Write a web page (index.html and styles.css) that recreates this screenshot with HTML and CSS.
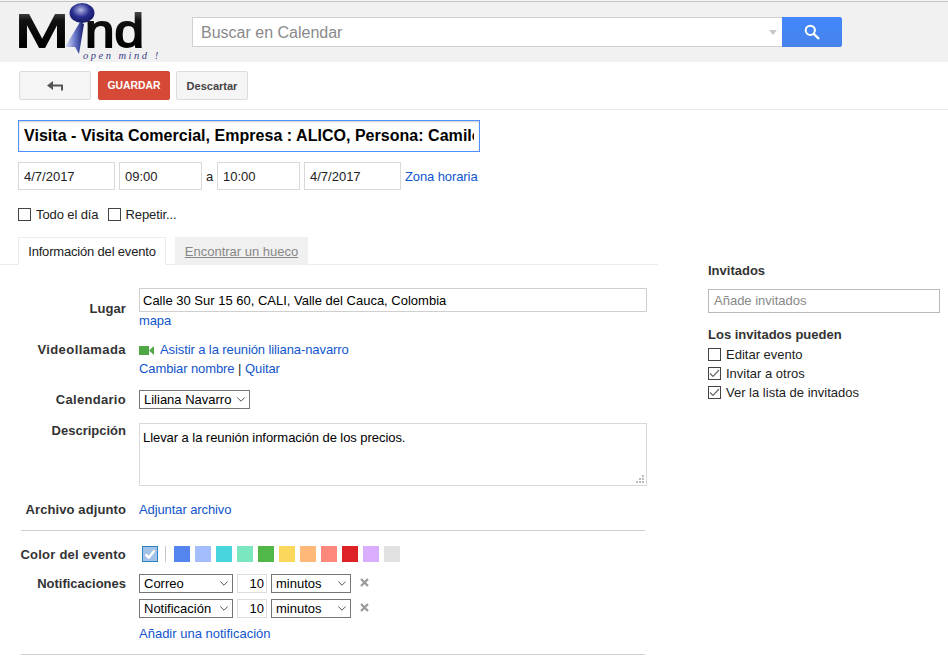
FILE: index.html
```html
<!DOCTYPE html>
<html lang="es">
<head>
<meta charset="utf-8">
<title>Calendar</title>
<link rel="stylesheet" href="styles.css">
</head>
<body>
<header class="topbar">
  <svg class="logo" width="165" height="60" viewBox="0 0 165 60" aria-label="Mind">
    <defs>
      <linearGradient id="ink" x1="0" y1="0" x2="0" y2="1">
        <stop offset="0" stop-color="#777"/><stop offset="0.3" stop-color="#111"/><stop offset="0.8" stop-color="#000"/><stop offset="1" stop-color="#555"/>
      </linearGradient>
      <radialGradient id="ball" cx="0.45" cy="0.35" r="0.7">
        <stop offset="0" stop-color="#b4b9e6"/><stop offset="0.5" stop-color="#2a2f90"/><stop offset="1" stop-color="#10145a"/>
      </radialGradient>
      <linearGradient id="stem" x1="0" y1="0" x2="1" y2="0">
        <stop offset="0" stop-color="#e4e7f7"/><stop offset="0.55" stop-color="#6472c6"/><stop offset="1" stop-color="#12186a"/>
      </linearGradient>
    </defs>
    <text class="logo-big" x="15" y="45" textLength="54" lengthAdjust="spacingAndGlyphs" fill="url(#ink)" stroke="url(#ink)" stroke-width="1.8">M</text>
    <text class="logo-big" x="85" y="45" textLength="59" lengthAdjust="spacingAndGlyphs" fill="url(#ink)" stroke="url(#ink)" stroke-width="1.8">nd</text>
    <path d="M80 20 L84 22 L79 52 L75 45 L65 45 Z" fill="url(#stem)"/>
    <ellipse cx="82" cy="11" rx="12.5" ry="10" fill="url(#ball)"/>
    <text class="logo-small" x="83" y="57" fill="#3a3f8a">open mind !</text>
  </svg>
  <form class="search">
    <div class="search-box">
      <span class="search-ph">Buscar en Calendar</span>
      <span class="search-caret"></span>
    </div>
    <div class="search-btn">
      <svg width="16" height="16" viewBox="0 0 16 16"><circle cx="6.3" cy="6.3" r="4.6" fill="none" stroke="#fff" stroke-width="2"/><path d="M9.8 9.8 L15 15" stroke="#fff" stroke-width="2.4"/></svg>
    </div>
  </form>
</header>

<div class="toolbar">
  <button class="btn btn-back" type="button">
    <svg width="16" height="10" viewBox="0 0 16 10"><path d="M0 4.5 L6 0 V3.5 H16 V9.5 H14 V5.5 H6 V9 Z" fill="#555"/></svg>
  </button>
  <button class="btn btn-save" type="button">GUARDAR</button>
  <button class="btn btn-discard" type="button">Descartar</button>
</div>

<main class="main">
  <section class="left">
    <div class="title-input"><span class="title-text">Visita - Visita Comercial, Empresa : ALICO, Persona: Camilo Restrepo</span></div>

    <div class="date-row">
      <span class="field w-date">4/7/2017</span>
      <span class="field w-time">09:00</span>
      <span class="a">a</span>
      <span class="field w-time">10:00</span>
      <span class="field w-date">4/7/2017</span>
      <a class="link">Zona horaria</a>
    </div>

    <div class="check-row">
      <label class="check-item"><span class="box"></span>Todo el día</label>
      <label class="check-item"><span class="box"></span>Repetir...</label>
    </div>

    <div class="tabs">
      <span class="tab tab-on">Información del evento</span>
      <span class="tab tab-off">Encontrar un hueco</span>
    </div>

    <div class="form">
      <div class="row row-place">
        <span class="lab lab-place">Lugar</span>
        <div class="val">
          <span class="field field-wide">Calle 30 Sur 15 60, CALI, Valle del Cauca, Colombia</span>
          <a class="link link-map">mapa</a>
        </div>
      </div>
      <div class="row row-video">
        <span class="lab">Videollamada</span>
        <div class="val">
          <div class="video-line">
            <svg class="cam" width="15" height="9" viewBox="0 0 15 9"><rect width="10" height="9" fill="#4fa845"/><path d="M10 4.5 L15 0 V9 Z" fill="#4fa845"/></svg>
            <a class="link">Asistir a la reunión liliana-navarro</a>
          </div>
          <div class="video-links"><a class="link">Cambiar nombre</a> | <a class="link">Quitar</a></div>
        </div>
      </div>
      <div class="row row-cal">
        <span class="lab">Calendario</span>
        <div class="val">
          <span class="sel-wrap sel-cal"><select class="sel"><option>Liliana Navarro</option></select><svg class="chev" width="8" height="5" viewBox="0 0 8 5"><path d="M0.3 0.5 L4 4.2 L7.7 0.5" fill="none" stroke="#555" stroke-width="1"/></svg></span>
        </div>
      </div>
      <div class="row row-desc">
        <span class="lab lab-tight">Descripción</span>
        <div class="val">
          <div class="desc">Llevar a la reunión información de los precios.
            <svg class="grip" width="8" height="8" viewBox="0 0 8 8"><path d="M6 0h2v2H6zM3 3h2v2H3zM6 3h2v2H6zM0 6h2v2H0zM3 6h2v2H3zM6 6h2v2H6z" fill="#bbb"/></svg>
          </div>
        </div>
      </div>
      <div class="row row-attach">
        <span class="lab">Archivo adjunto</span>
        <div class="val"><a class="link">Adjuntar archivo</a></div>
      </div>
      <hr class="rule">
      <div class="row row-color">
        <span class="lab">Color del evento</span>
        <div class="val swatches">
          <span class="sw sw-current"><svg width="14" height="14" viewBox="0 0 14 14"><path d="M2.5 7.5 L5.8 10.5 L11.5 3.5" fill="none" stroke="#fff" stroke-width="2.4"/></svg></span>
          <span class="sw-sep"></span>
          <span class="sw c1"></span><span class="sw c2"></span><span class="sw c3"></span><span class="sw c4"></span><span class="sw c5"></span><span class="sw c6"></span><span class="sw c7"></span><span class="sw c8"></span><span class="sw c9"></span><span class="sw c10"></span><span class="sw c11"></span>
        </div>
      </div>
      <div class="row row-notif">
        <span class="lab lab-notif lab-tight">Notificaciones</span>
        <div class="val">
          <div class="notif">
            <span class="sel-wrap sel-type"><select class="sel"><option>Correo</option></select><svg class="chev" width="8" height="5" viewBox="0 0 8 5"><path d="M0.3 0.5 L4 4.2 L7.7 0.5" fill="none" stroke="#555" stroke-width="1"/></svg></span>
            <span class="num">10</span>
            <span class="sel-wrap sel-unit"><select class="sel"><option>minutos</option></select><svg class="chev" width="8" height="5" viewBox="0 0 8 5"><path d="M0.3 0.5 L4 4.2 L7.7 0.5" fill="none" stroke="#555" stroke-width="1"/></svg></span>
            <svg class="x" width="9" height="9" viewBox="0 0 9 9"><path d="M1 1 L8 8 M8 1 L1 8" stroke="#999" stroke-width="2.2"/></svg>
          </div>
          <div class="notif">
            <span class="sel-wrap sel-type"><select class="sel"><option>Notificación</option></select><svg class="chev" width="8" height="5" viewBox="0 0 8 5"><path d="M0.3 0.5 L4 4.2 L7.7 0.5" fill="none" stroke="#555" stroke-width="1"/></svg></span>
            <span class="num">10</span>
            <span class="sel-wrap sel-unit"><select class="sel"><option>minutos</option></select><svg class="chev" width="8" height="5" viewBox="0 0 8 5"><path d="M0.3 0.5 L4 4.2 L7.7 0.5" fill="none" stroke="#555" stroke-width="1"/></svg></span>
            <svg class="x" width="9" height="9" viewBox="0 0 9 9"><path d="M1 1 L8 8 M8 1 L1 8" stroke="#999" stroke-width="2.2"/></svg>
          </div>
          <a class="link link-add">Añadir una notificación</a>
        </div>
      </div>
      <hr class="rule rule-end">
    </div>
  </section>

  <aside class="right">
    <h3 class="side-h">Invitados</h3>
    <div class="guest-input">Añade invitados</div>
    <h3 class="side-h side-h2">Los invitados pueden</h3>
    <label class="perm"><span class="box"></span>Editar evento</label>
    <label class="perm"><span class="box"><svg width="13" height="13" viewBox="0 0 13 13"><path d="M2 6.5 L5 9.5 L11 3" fill="none" stroke="#666" stroke-width="1.2"/></svg></span>Invitar a otros</label>
    <label class="perm"><span class="box"><svg width="13" height="13" viewBox="0 0 13 13"><path d="M2 6.5 L5 9.5 L11 3" fill="none" stroke="#666" stroke-width="1.2"/></svg></span>Ver la lista de invitados</label>
  </aside>
</main>
</body>
</html>
```
FILE: styles.css
```css
* { box-sizing: border-box; }
html, body { margin: 0; padding: 0; height: 659px; overflow: hidden; }
body { background: #fff; color: #222; font: 13px/15px "Liberation Sans", Arial, sans-serif; }
.link { color: #1155cc; text-decoration: none; letter-spacing: -.1px; }

.topbar { height: 62px; background: #f1f1f1; border-top: 1px solid #f6f6f6; box-shadow: inset 0 1px #c4c4c4; display: flex; align-items: flex-start; padding-top: 1px; }
.logo { display: block; flex: none; margin-right: 27px; width: 165px; height: 60px; }
.logo-big { font: 46px "Liberation Sans", Arial, sans-serif; }
.logo-small { font: italic 10.5px "Liberation Serif", serif; letter-spacing: 2.5px; }
.search { display: flex; margin-top: 15px; }
.search-box { width: 590px; height: 30px; background: #fff; border: 1px solid #d0d0d0; border-right: 0; display: flex; align-items: center; justify-content: space-between; padding: 0 5px 0 8px; }
.search-ph { font-size: 16px; color: #8a8a8a; }
.search-caret { width: 0; height: 0; border: 4px solid transparent; border-top: 5px solid #c8c8c8; border-bottom: 0; }
.search-btn { width: 60px; height: 30px; background: linear-gradient(#4387fd, #4683ea); border-radius: 0 2px 2px 0; display: flex; align-items: center; justify-content: center; }

.toolbar { height: 48px; padding: 9px 0 0 19px; border-bottom: 1px solid #ebebeb; display: flex; align-items: flex-start; gap: 7px; }
.btn { height: 29px; border-radius: 2px; border: 1px solid #dcdcdc; background: #f5f5f5; font: bold 11px "Liberation Sans", Arial, sans-serif; color: #444; padding: 0; display: flex; align-items: center; justify-content: center; }
.btn-back { width: 72px; }
.btn-save { width: 72px; background: #d64937; border-color: #d14836; color: #fff; font-size: 10.4px; }
.btn-discard { width: 72px; margin-left: -1px; }

.main { display: flex; align-items: flex-start; }
.left { width: 658px; flex: none; padding-top: 10px; }
.right { margin-left: 50px; width: 232px; padding-top: 153px; }

.title-input { width: 462px; height: 32px; margin-left: 18px; border: 1px solid #4d90fe; box-shadow: inset 0 1px 2px rgba(0,0,0,.2); padding: 0 0 0 5px; display: flex; align-items: center; overflow: hidden; }
.title-text { font: bold 16px "Liberation Sans", Arial, sans-serif; letter-spacing: .03px; color: #000; white-space: nowrap; display: block; width: 450px; overflow: hidden; }

.date-row { display: flex; align-items: center; margin: 10px 0 0 18px; height: 28px; }
.field { display: flex; align-items: center; border: 1px solid #d9d9d9; height: 28px; padding-left: 5px; color: #222; white-space: nowrap; }
.w-date { width: 97px; }
.w-time { width: 83px; margin-left: 4px; }
.a { width: 11px; padding-left: 4px; }
.a + .w-time { margin-left: 4px; }
.w-time + .w-date { margin-left: 4px; }
.date-row .link { margin-left: 4px; }

.check-row { display: flex; margin: 18px 0 0 18px; height: 13px; align-items: center; gap: 9px; }
.check-item { display: flex; align-items: center; gap: 5px; letter-spacing: -.1px; }
.box { display: block; flex: none; width: 13px; height: 13px; border: 1px solid #444; background: #fff; position: relative; }
.box svg { display: block; margin: -1px; }

.tabs { display: flex; margin: 16px 0 0 18px; height: 28px; gap: 9px; align-items: flex-end; }
.tab { height: 28px; display: flex; align-items: center; justify-content: center; }
.tab-on { width: 148px; border: 1px solid #ececec; border-bottom: 1px solid #fff; background: #fff; letter-spacing: -.18px; }
.tab-off { width: 133px; background: #f0f0f0; color: #888; text-decoration: underline; }

.form { border-top: 1px solid #ebebeb; margin-top: -1px; padding-top: 23px; }
.row { display: flex; }
.lab { flex: none; width: 126px; font-weight: bold; text-align: right; color: #333; margin-right: 13px; letter-spacing: .1px; }
.lab-tight { letter-spacing: 0; }
.val { flex: none; width: 508px; }

.lab-place { padding-top: 13px; }
.row-place .field { height: 24px; border-color: #cfcfcf; padding-left: 3px; color: #000; }
.link-map { display: block; margin-top: 1px; }
.row-video { margin-top: 14px; }
.row-video .lab { letter-spacing: .42px; }
.video-line { display: flex; align-items: center; gap: 6px; height: 15px; }
.cam { display: block; margin-top: 1px; }
.video-links { margin-top: 4px; }
.row-cal { margin-top: 14px; }
.row-cal .lab { padding-top: 2px; letter-spacing: .3px; }
.sel-wrap { display: block; position: relative; flex: none; height: 19px; }
.sel { appearance: none; -webkit-appearance: none; width: 100%; font: 13px "Liberation Sans", Arial, sans-serif; color: #000; background: #fff; height: 19px; border: 1px solid #767676; border-radius: 0; padding: 0 0 0 4px; display: block; }
.chev { position: absolute; right: 5px; top: 7px; pointer-events: none; }
.sel-cal { width: 111px; }
.row-desc { margin-top: 14px; }
.desc { position: relative; width: 508px; height: 63px; border: 1px solid #d9d9d9; padding: 6px 3px 0; line-height: 15px; color: #000; letter-spacing: -.06px; }
.grip { position: absolute; right: 2px; bottom: 2px; }
.row-attach { margin-top: 16px; }

.rule { width: 624px; margin: 13px 0 0 21px; height: 0; border: 0; border-top: 1px solid #cfcfcf; }
.row-color { margin-top: 15px; height: 16px; }
.row-color .lab { line-height: 16px; padding-top: 1px; letter-spacing: .23px; }
.swatches { display: flex; align-items: flex-start; margin-left: 3px; gap: 5px; }
.sw { display: block; width: 16px; height: 16px; flex: none; }
.sw-current { background: #a4c2e8; border: 1px solid #2a82c0; display: flex; align-items: center; justify-content: center; }
.sw-sep { width: 1px; height: 16px; background: #c8c8c8; margin: 0 3px 0 2px; }
.c1 { background: #5484ed; }
.c2 { background: #a4bdfc; }
.c3 { background: #46d6db; }
.c4 { background: #7ae7bf; }
.c5 { background: #51b749; }
.c6 { background: #fbd75b; }
.c7 { background: #ffb878; }
.c8 { background: #ff887c; }
.c9 { background: #dc2127; }
.c10 { background: #dbadff; }
.c11 { background: #e1e1e1; }

.row-notif { margin-top: 12px; }
.lab-notif { padding-top: 2px; }
.notif { display: flex; align-items: center; height: 19px; margin-bottom: 6px; }
.sel-type { width: 94px; }
.sel-unit { width: 80px; }
.num { width: 30px; height: 19px; margin: 0 4px; border: 1px solid #dcdcdc; text-align: right; padding-right: 2px; line-height: 17px; color: #000; }
.x { margin-left: 9px; margin-top: -2px; }
.link-add { display: block; margin-top: 8px; letter-spacing: 0; }
.rule-end { margin-top: 13px; }

.side-h { margin: 0; font-size: 13px; line-height: 15px; font-weight: bold; color: #333; }
.guest-input { width: 232px; height: 24px; margin-top: 11px; border: 1px solid #b9b9b9; padding-left: 5px; line-height: 22px; color: #888; }
.side-h2 { margin-top: 14px; }
.perm { display: flex; align-items: center; gap: 5px; height: 15px; margin-top: 4px; }
.side-h2 + .perm { margin-top: 5px; }
```
